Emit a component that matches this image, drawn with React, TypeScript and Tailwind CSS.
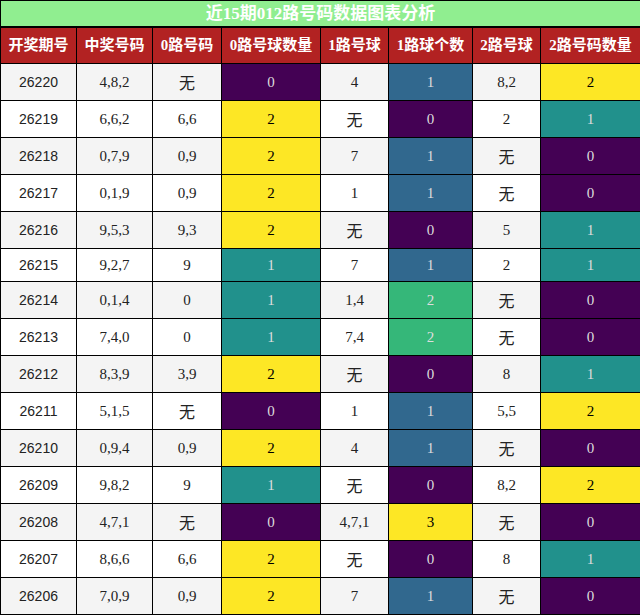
import React from 'react';

type Row = [string, string, string, number, string, number, string, number];

const rows: Row[] = [
  ['26220', '4,8,2', '无', 0, '4', 1, '8,2', 2],
  ['26219', '6,6,2', '6,6', 2, '无', 0, '2', 1],
  ['26218', '0,7,9', '0,9', 2, '7', 1, '无', 0],
  ['26217', '0,1,9', '0,9', 2, '1', 1, '无', 0],
  ['26216', '9,5,3', '9,3', 2, '无', 0, '5', 1],
  ['26215', '9,2,7', '9', 1, '7', 1, '2', 1],
  ['26214', '0,1,4', '0', 1, '1,4', 2, '无', 0],
  ['26213', '7,4,0', '0', 1, '7,4', 2, '无', 0],
  ['26212', '8,3,9', '3,9', 2, '无', 0, '8', 1],
  ['26211', '5,1,5', '无', 0, '1', 1, '5,5', 2],
  ['26210', '0,9,4', '0,9', 2, '4', 1, '无', 0],
  ['26209', '9,8,2', '9', 1, '无', 0, '8,2', 2],
  ['26208', '4,7,1', '无', 0, '4,7,1', 3, '无', 0],
  ['26207', '8,6,6', '6,6', 2, '无', 0, '8', 1],
  ['26206', '7,0,9', '0,9', 2, '7', 1, '无', 0],
];

// viridis-like scale, per column max
const scale2: Record<number, string> = {
  0: 'bg-[#440154] text-[#ddd]',
  1: 'bg-[#21918c] text-[#ddd]',
  2: 'bg-[#fde725] text-black',
};
const scale3: Record<number, string> = {
  0: 'bg-[#440154] text-[#ddd]',
  1: 'bg-[#31688e] text-[#ddd]',
  2: 'bg-[#35b779] text-[#ddd]',
  3: 'bg-[#fde725] text-black',
};

const headers = ['开奖期号', '中奖号码', '0路号码', '0路号球数量', '1路号球', '1路球个数', '2路号球', '2路号码数量'];
const widths = ['w-[76px]', 'w-[76px]', 'w-[69px]', 'w-[99px]', 'w-[68px]', 'w-[84px]', 'w-[68px]', 'w-[100px]'];

const cell = 'border border-black text-center p-0';
const serif = "font-['Liberation_Serif','Noto_Sans_CJK_SC',serif]";

const Txt: React.FC<{ v: string }> = ({ v }) =>
  v === '无' ? (
    <span className="inline-block translate-y-[2px] text-[16px] font-['Noto_Sans_CJK_SC',sans-serif] leading-none">无</span>
  ) : (
    <>{v}</>
  );

export default function App() {
  return (
    <div className="w-[640px] h-[616px] bg-white">
      <table className="w-[640px] table-fixed border-collapse">
        <colgroup>
          {widths.map((w, i) => (
            <col key={i} className={w} />
          ))}
        </colgroup>
        <thead>
          <tr className="h-[26px]">
            <th
              colSpan={8}
              className={`border border-black border-b-2 bg-[#90ee90] text-white text-[17px] font-bold leading-none p-0 ${serif}`}
            >
              近15期012路号码数据图表分析
            </th>
          </tr>
          <tr className="h-[37px]">
            {headers.map((h) => (
              <th key={h} className={`${cell} bg-[#b22222] text-white text-[15px] font-bold ${serif}`}>
                {h}
              </th>
            ))}
          </tr>
        </thead>
        <tbody>
          {rows.map((r, i) => {
            const bg = i % 2 === 0 ? 'bg-[#f4f4f4]' : 'bg-white';
            const h = r.includes('无') ? 'h-[37px]' : 'h-[33px]';
            return (
              <tr key={r[0]} className={`${h} ${bg} text-[15px] text-[#222]`}>
                <td className={`${cell} text-[14px] font-['Liberation_Sans',sans-serif]`}>{r[0]}</td>
                <td className={`${cell} ${serif}`}>{r[1]}</td>
                <td className={`${cell} ${serif}`}><Txt v={r[2]} /></td>
                <td className={`${cell} ${serif} ${scale2[r[3]]}`}>{r[3]}</td>
                <td className={`${cell} ${serif}`}><Txt v={r[4]} /></td>
                <td className={`${cell} ${serif} ${scale3[r[5]]}`}>{r[5]}</td>
                <td className={`${cell} ${serif}`}><Txt v={r[6]} /></td>
                <td className={`${cell} ${serif} ${scale2[r[7]]}`}>{r[7]}</td>
              </tr>
            );
          })}
        </tbody>
      </table>
    </div>
  );
}
